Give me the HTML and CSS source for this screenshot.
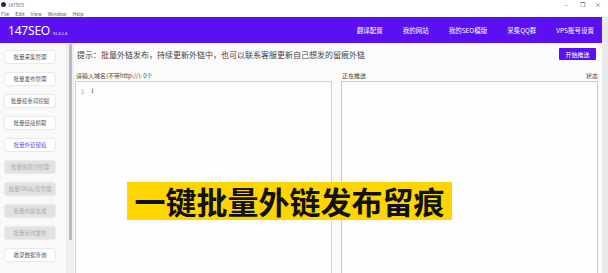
FILE: index.html
```html
<!DOCTYPE html>
<html lang="zh-CN">
<head>
<meta charset="utf-8">
<title>147SEO</title>
<link rel="stylesheet" href="styles.css">
</head>
<body>
<div class="titlebar">
  <span class="app-icon"></span>
  <span class="app-title">147SEO</span>
  <div class="win-controls">
    <span class="wc">&#8211;</span>
    <span class="wc">&#10064;</span>
    <span class="wc">&#215;</span>
  </div>
</div>
<div class="menubar">
  <span>File</span><span>Edit</span><span>View</span><span>Window</span><span>Help</span>
</div>
<div class="window">
  <div class="main">
    <header class="header">
      <div class="brand"><span class="logo">147SEO</span><span class="ver">v1.4.1.4</span></div>
      <nav class="nav">
        <span>翻译配置</span>
        <span>我的网站</span>
        <span>我的SEO模版</span>
        <span>采集QQ群</span>
        <span>VPS账号设置</span>
      </nav>
    </header>
    <div class="body">
      <aside class="sidebar">
        <div class="btn">批量采集管理</div>
        <div class="btn">批量发布管理</div>
        <div class="btn">批量权重词挖掘</div>
        <div class="btn">批量链接抓取</div>
        <div class="btn active">批量外链留痕</div>
        <div class="btn disabled">批量伪原创管理</div>
        <div class="btn disabled">批量TAG标签管理</div>
        <div class="btn disabled">批量内容生成</div>
        <div class="btn disabled">批量定时发布</div>
        <div class="btn">收录数据查询</div>
      </aside>
      <div class="scrollbar"><div class="thumb"></div></div>
      <section class="content">
        <div class="tip-row">
          <p class="tip">提示：批量外链发布，持续更新外链中，也可以联系客服更新自己想发的留痕外链</p>
          <button class="push">开始推送</button>
        </div>
        <div class="panels">
          <div class="panel">
            <div class="label-row"><span>请输入域名(不带http://): 0个</span></div>
            <div class="box box-input">
              <span class="lineno">1</span><span class="caret">I</span>
            </div>
          </div>
          <div class="panel">
            <div class="label-row"><span>正在推送</span><span>状态</span></div>
            <div class="box box-status"></div>
          </div>
        </div>
      </section>
    </div>
  </div>
  <div class="edge"></div>
</div>
<div class="banner">一键批量外链发布留痕</div>
</body>
</html>
```
FILE: styles.css
```css
* { box-sizing: border-box; margin: 0; padding: 0; }
html, body {
  width: 608px;
  height: 273px;
  overflow: hidden;
}
body {
  position: relative;
  background: #fbfbfb;
  font-family: "Noto Sans CJK SC", "Noto Sans", sans-serif;
  color: #333;
}
.titlebar {
  height: 9px;
  display: flex;
  align-items: center;
  background: #fff;
  padding-left: 1px;
}
.app-icon {
  width: 5px;
  height: 5px;
  border-radius: 50%;
  background: #2b2b3a;
}
.app-title {
  font-size: 4.5px;
  margin-left: 2px;
  color: #555;
}
.win-controls {
  margin-left: auto;
  display: flex;
  gap: 10px;
  padding-right: 7px;
  font-size: 6px;
  color: #555;
}
.wc { width: 6px; text-align: center; }
.menubar {
  height: 8px;
  display: flex;
  align-items: center;
  gap: 6px;
  padding-left: 1px;
  font-size: 5px;
  color: #555;
  background: #fff;
}
.window {
  display: flex;
  height: 256px;
}
.main {
  width: 602px;
  display: flex;
  flex-direction: column;
}
.edge {
  width: 6px;
  background: #e9e9ea;
}
.header {
  height: 26px;
  background: #5a10f0;
  display: flex;
  align-items: center;
  padding-left: 8px;
  color: #fff;
}
.brand { display: flex; align-items: baseline; }
.logo { font-size: 12px; font-family: "Noto Sans", sans-serif; letter-spacing: -0.2px; }
.ver { font-size: 4px; margin-left: 3px; }
.nav {
  margin-left: auto;
  display: flex;
  gap: 20px;
  padding-right: 8px;
  font-size: 6.5px;
}
.body {
  flex: 1;
  display: flex;
  min-height: 0;
}
.sidebar {
  width: 66px;
  padding: 8px 0 0 5px;
  display: flex;
  flex-direction: column;
  gap: 10px;
  background: #f9f9f9;
}
.btn {
  width: 50px;
  height: 12px;
  background: #fff;
  border-radius: 2px;
  box-shadow: 0 0 1.5px rgba(0,0,0,0.3);
  font-size: 5.5px;
  display: flex;
  align-items: center;
  justify-content: center;
  color: #555;
  white-space: nowrap;
}
.btn.active { color: #7a4af0; }
.btn.disabled { background: #e2e2e2; color: #ababab; }
.scrollbar {
  width: 8px;
  background: #efeff2;
  padding: 1px 2px 0 3px;
}
.thumb {
  width: 3px;
  height: 196px;
  background: #b9b9c2;
  border-radius: 1px;
}
.content {
  flex: 1;
  display: flex;
  flex-direction: column;
  padding: 0 4px 0 1px;
}
.tip-row {
  height: 22px;
  display: flex;
  align-items: center;
  padding-left: 2px;
  padding-right: 2px;
}
.tip {
  font-size: 8px;
  color: #444;
}
.push {
  margin-left: auto;
  width: 37px;
  height: 12px;
  background: #5a10f0;
  color: #fff;
  border: none;
  border-radius: 1px;
  font-family: "Noto Sans CJK SC", sans-serif;
  font-size: 6px;
}
.panels {
  flex: 1;
  display: flex;
  gap: 9px;
  padding-top: 5px;
}
.panel {
  flex: 1;
  display: flex;
  flex-direction: column;
}
.label-row {
  height: 11px;
  display: flex;
  justify-content: space-between;
  align-items: center;
  font-size: 6px;
  color: #444;
  padding: 0 0 0 1px;
}
.box {
  flex: 1;
  background: #fdfdfd;
  border: 1px solid #ddd5a0;
  border-bottom: none;
}
.box-status { border-color: #cbc4f2; }
.box-input {
  display: flex;
  align-items: flex-start;
  padding: 5px 0 0 5px;
  font-size: 6px;
}
.lineno { color: #999; }
.caret { margin-left: 7px; color: #333; font-family: "DejaVu Serif", serif; font-size: 6px; }
.banner {
  position: absolute;
  left: 127px;
  top: 182px;
  width: 325px;
  height: 38px;
  background: #fdd600;
  color: #111;
  font-weight: 700;
  font-size: 31px;
  line-height: 38px;
  text-align: center;
  white-space: nowrap;
  letter-spacing: 0;
}
```
